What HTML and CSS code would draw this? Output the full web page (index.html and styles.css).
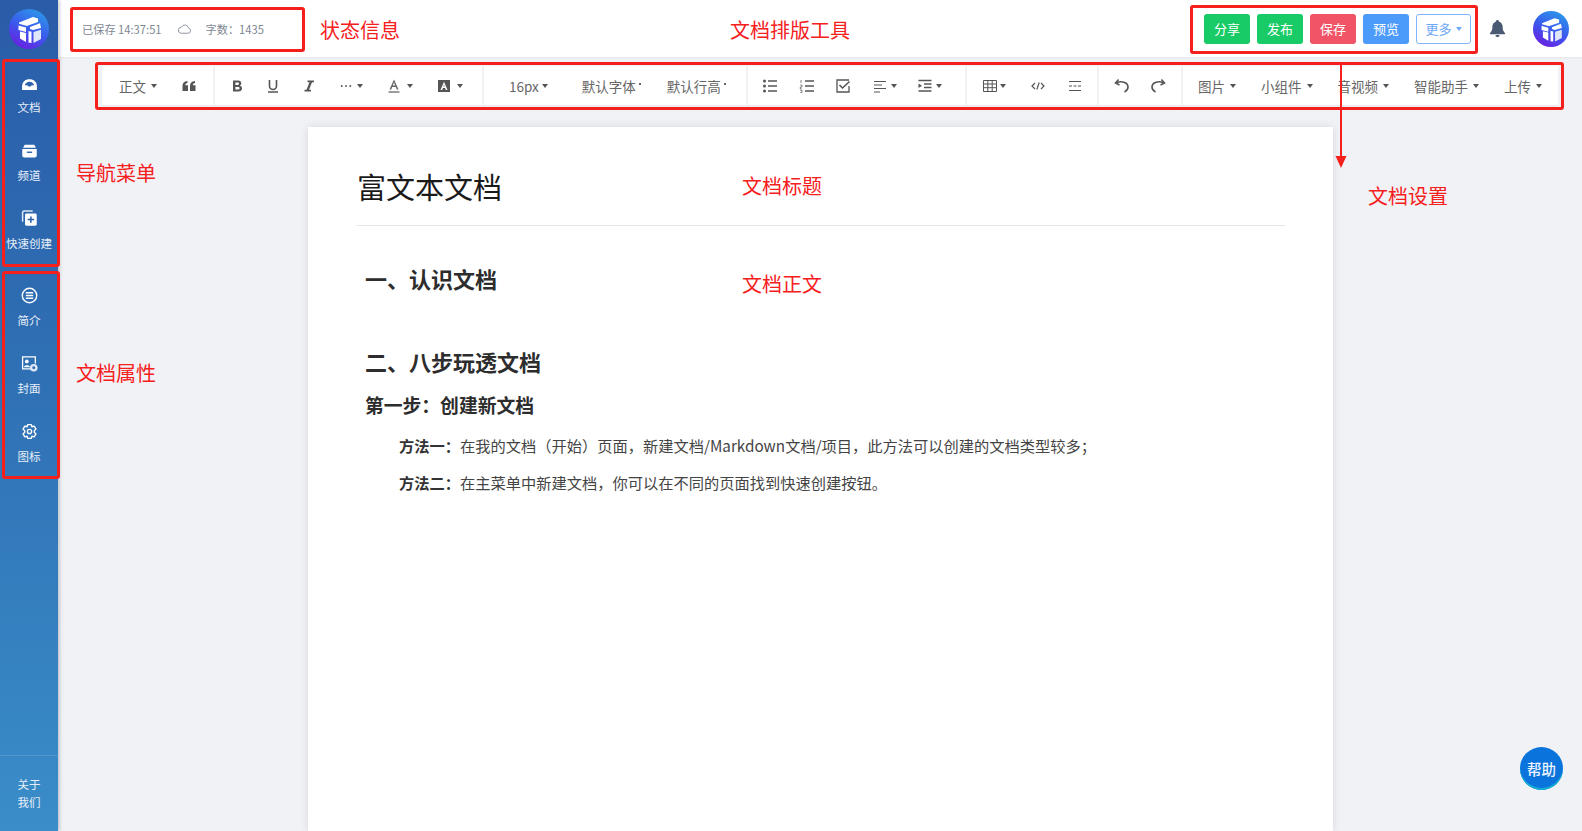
FILE: index.html
```html
<!DOCTYPE html>
<html lang="zh-CN">
<head>
<meta charset="utf-8">
<title>富文本文档</title>
<link rel="stylesheet" href="styles.css">
</head>
<body>
<svg class="defs" width="0" height="0" aria-hidden="true">
  <defs>
    <linearGradient id="lg" x1="0.8" y1="0" x2="0.3" y2="1">
      <stop offset="0" stop-color="#2b9be8"/><stop offset="0.55" stop-color="#3c58ee"/><stop offset="1" stop-color="#6a1fe0"/>
    </linearGradient>
    <symbol id="logo" viewBox="0 0 40 40">
      <circle cx="20" cy="20" r="20" fill="url(#lg)"/>
      <path d="M10 13.5 L24 8 L29 9.5 L29 13 L19 16.5 L18 17 L10 14.8Z" fill="#fff"/>
      <path d="M21 18 L31 14.3 L32 19 L24 21 L21 20Z" fill="#fff"/>
      <path d="M9.5 16.5 L17 18.5 L17 23 L9.5 21Z" fill="#fff"/>
      <path d="M11 22.5 L17 24 L17 33 L11 29.5Z" fill="#fff"/>
      <path d="M19.5 22 L22.5 22.8 L22.5 34 L19.5 33.5Z" fill="#fff"/>
      <path d="M24.5 23 L32 20.8 L32 30 L24.5 34Z" fill="#dfe6f7"/>
    </symbol>
  </defs>
</svg>

<aside class="side">
  <svg class="logo side-logo"><use href="#logo"/></svg>
  <nav class="side-group">
    <a class="side-item"><svg class="side-ico" viewBox="0 0 16 16"><path d="M1 12 C1 7.5 4 5 8 5 S15 7.5 15 12 V15 H1Z" fill="#fff"/><path d="M3.5 10.5 C4.3 8.5 6 7.3 8 7.3 S11.7 8.5 12.5 10.5 H10 L9 11.8 H7 L6 10.5Z" fill="#2b62ac"/></svg><span>文档</span></a>
    <a class="side-item"><svg class="side-ico" viewBox="0 0 16 16"><path d="M3.5 2.5 H12.5 L14 5.5 H2Z" fill="#fff"/><path d="M1.2 6.5 H14.8 V13 Q14.8 14.5 13 14.5 H3 Q1.2 14.5 1.2 13Z" fill="#fff"/><rect x="5.5" y="9" width="5" height="1.3" fill="#2b62ac"/></svg><span>频道</span></a>
    <a class="side-item"><svg class="side-ico" viewBox="0 0 16 16"><path d="M1.5 11 V2.5 Q1.5 1 3 1 H11" fill="none" stroke="#dfe8f5" stroke-width="1.4"/><rect x="3.8" y="3.3" width="11" height="11.5" rx="1.4" fill="#fff"/><path d="M9.3 6 V12 M6.3 9 H12.3" stroke="#2b62ac" stroke-width="1.5"/></svg><span>快速创建</span></a>
  </nav>
  <nav class="side-group side-group-b">
    <a class="side-item"><svg class="side-ico" viewBox="0 0 16 16"><circle cx="8" cy="8" r="6.8" fill="none" stroke="#fff" stroke-width="1.3"/><path d="M4.5 5.5 H11.5 M4.5 8 H11.5 M4.5 10.5 H11.5" stroke="#fff" stroke-width="1.4"/></svg><span>简介</span></a>
    <a class="side-item"><svg class="side-ico" viewBox="0 0 16 16"><path d="M9 13 H1.5 V1.8 H13.5 V8" fill="none" stroke="#fff" stroke-width="1.2"/><circle cx="5.5" cy="6" r="1.8" fill="#fff"/><path d="M2.8 11.5 C3 9 8 9 8.5 11.5Z" fill="#fff"/><circle cx="12" cy="12" r="3.6" fill="#dfe8f5"/><circle cx="12" cy="12" r="1.4" fill="#2f6db0"/></svg><span>封面</span></a>
    <a class="side-item"><svg class="side-ico" viewBox="0 0 16 16"><path d="M6.3 1.5 H9.7 L10.3 3.5 L12.4 2.9 L14.1 5.7 L12.5 7.2 V8.8 L14.1 10.3 L12.4 13.1 L10.3 12.5 L9.7 14.5 H6.3 L5.7 12.5 L3.6 13.1 L1.9 10.3 L3.5 8.8 V7.2 L1.9 5.7 L3.6 2.9 L5.7 3.5Z" fill="none" stroke="#fff" stroke-width="1.3" stroke-linejoin="round"/><circle cx="8" cy="8" r="2" fill="none" stroke="#fff" stroke-width="1.3"/></svg><span>图标</span></a>
  </nav>
  <div class="side-about">关于<br>我们</div>
</aside>

<div class="main">
  <header class="top">
    <div class="status">
      <span>已保存 14:37:51</span>
      <svg class="cloud" viewBox="0 0 16 12"><path d="M4 10.5 H12 A2.8 2.8 0 0 0 12.4 5 A4.2 4.2 0 0 0 4.6 4 A3.3 3.3 0 0 0 4 10.5Z" fill="none" stroke="#8a929c" stroke-width="1"/></svg>
      <span>字数：1435</span>
    </div>
    <div class="actions">
      <button class="btn btn-green">分享</button>
      <button class="btn btn-green">发布</button>
      <button class="btn btn-red">保存</button>
      <button class="btn btn-blue">预览</button>
      <button class="btn btn-line">更多<i class="caret caret-blue"></i></button>
      <svg class="bell" viewBox="0 0 18 20"><path d="M9 1 C10 1 10.5 1.6 10.5 2.5 C13.5 3.3 14.5 6 14.5 9 C14.5 12 15.5 13.5 17 15 V16 H1 V15 C2.5 13.5 3.5 12 3.5 9 C3.5 6 4.5 3.3 7.5 2.5 C7.5 1.6 8 1 9 1Z" fill="#4a5a72"/><path d="M6.8 17 H11.2 A2.2 2.2 0 0 1 6.8 17Z" fill="#4a5a72"/></svg>
      <svg class="logo top-logo"><use href="#logo"/></svg>
    </div>
  </header>

  <div class="tool-wrap">
    <div class="toolbar">
      <div class="tg tg1">
        <span class="ti">正文<i class="caret"></i></span>
        <svg class="ic" viewBox="0 0 16 16"><path d="M1.5 13 V8 C1.5 5 3 3.5 6.5 3 V5 C5 5.3 4.3 6 4.3 7.2 H7 V13Z M9 13 V8 C9 5 10.5 3.5 14 3 V5 C12.5 5.3 11.8 6 11.8 7.2 H14.5 V13Z" fill="#555"/></svg>
      </div>
      <div class="tg tg2">
        <svg class="ic" viewBox="0 0 16 16"><path d="M4 2.5 H9 C11.5 2.5 12.3 4 12.3 5.3 C12.3 6.5 11.5 7.3 10.8 7.6 C12 8 13 9 13 10.5 C13 12.3 11.5 13.5 9.5 13.5 H4Z M6.4 4.5 V6.9 H8.6 C9.5 6.9 10 6.3 10 5.7 C10 5 9.5 4.5 8.6 4.5Z M6.4 8.9 V11.5 H9 C10 11.5 10.6 11 10.6 10.2 C10.6 9.4 10 8.9 9 8.9Z" fill="#555" fill-rule="evenodd"/></svg>
        <svg class="ic" viewBox="0 0 16 16"><path d="M4.5 2 V8 A3.5 3.5 0 0 0 11.5 8 V2" fill="none" stroke="#555" stroke-width="1.6"/><path d="M3 14 H13" stroke="#555" stroke-width="1.5"/></svg>
        <svg class="ic" viewBox="0 0 16 16"><path d="M6.5 2.5 H13 V4.3 H11 L8 11.8 H10 V13.5 H3.5 V11.8 H5.5 L8.5 4.3 H6.5Z" fill="#555"/></svg>
        <span class="ti"><svg class="ic-s" viewBox="0 0 14 4"><circle cx="2" cy="2" r="1.1" fill="#555"/><circle cx="7" cy="2" r="1.1" fill="#555"/><circle cx="12" cy="2" r="1.1" fill="#555"/></svg><i class="caret"></i></span>
        <span class="ti"><svg class="ic" viewBox="0 0 16 16"><path d="M8 1.5 L12.5 11.5 H10.8 L9.8 9 H6.2 L5.2 11.5 H3.5Z M6.8 7.5 H9.2 L8 4.5Z" fill="#666" fill-rule="evenodd"/><path d="M2.5 14 H13.5" stroke="#666" stroke-width="1.3"/></svg><i class="caret"></i></span>
        <span class="ti"><svg class="ic" viewBox="0 0 16 16"><path d="M2 2 H14 V14 H2Z M8 3.8 L4.5 12 H6.2 L6.9 10 H9.1 L9.8 12 H11.5Z M7.4 8.6 H8.6 L8 6.6Z" fill="#555" fill-rule="evenodd"/></svg><i class="caret"></i></span>
      </div>
      <div class="tg tg3">
        <span class="ti">16px<i class="caret"></i></span>
        <span class="ti ti-font">默认字体<i class="dot"></i></span>
        <span class="ti">默认行高<i class="dot"></i></span>
      </div>
      <div class="tg tg4">
        <svg class="ic" viewBox="0 0 16 16"><circle cx="2.5" cy="3" r="1.5" fill="#555"/><circle cx="2.5" cy="8" r="1.5" fill="#555"/><circle cx="2.5" cy="13" r="1.5" fill="#555"/><path d="M6 3 H15 M6 8 H15 M6 13 H15" stroke="#555" stroke-width="1.3"/></svg>
        <svg class="ic" viewBox="0 0 16 16"><path d="M2 2 V5 M1.3 7 H3 V9 H1.3 V11 H3 M1.3 12.5 H3 V14.5 H1.3" fill="none" stroke="#666" stroke-width=".8"/><path d="M6 3 H15 M6 8 H15 M6 13 H15" stroke="#555" stroke-width="1.3"/></svg>
        <svg class="ic" viewBox="0 0 16 16"><path d="M14 2 H2 V14 H14 V8" fill="none" stroke="#555" stroke-width="1.3"/><path d="M4.5 7 L7.5 10 L14.5 3.5" fill="none" stroke="#555" stroke-width="1.6"/></svg>
        <span class="ti"><svg class="ic" viewBox="0 0 16 16"><path d="M2 3.5 H14 M2 7 H10 M2 10.5 H14 M2 14 H8" stroke="#555" stroke-width="1.2"/></svg><i class="caret"></i></span>
        <span class="ti"><svg class="ic" viewBox="0 0 16 16"><path d="M1.5 2.5 H14.5 M7 6 H14.5 M7 9.5 H14.5 M1.5 13 H14.5" stroke="#555" stroke-width="1.6"/><path d="M1.5 5.5 L5 7.8 L1.5 10Z" fill="#555"/></svg><i class="caret"></i></span>
      </div>
      <div class="tg tg5">
        <span class="ti"><svg class="ic" viewBox="0 0 16 16"><path d="M1.5 2.5 H14.5 V13.5 H1.5Z M1.5 6 H14.5 M1.5 9.7 H14.5 M5.8 2.5 V13.5 M10.2 2.5 V13.5" fill="none" stroke="#555" stroke-width="1"/></svg><i class="caret"></i></span>
        <svg class="ic" viewBox="0 0 16 16"><path d="M5 5 L2 8 L5 11 M11 5 L14 8 L11 11 M9.2 4.5 L6.8 11.5" fill="none" stroke="#555" stroke-width="1.2"/></svg>
        <svg class="ic" viewBox="0 0 16 16"><path d="M2 3.5 H14 M2 12.5 H14" stroke="#555" stroke-width="1.1"/><path d="M2 8 H14" stroke="#555" stroke-width="1.1" stroke-dasharray="3 1.5"/></svg>
      </div>
      <div class="tg tg6">
        <svg class="ic" viewBox="0 0 16 16"><path d="M4.5 1.5 L1.5 5 L5.5 7" fill="none" stroke="#555" stroke-width="1.5"/><path d="M2 5 C7 2.5 14 4 14 9 C14 11.5 12.5 13 10.5 14" fill="none" stroke="#555" stroke-width="1.6"/></svg>
        <svg class="ic" viewBox="0 0 16 16"><path d="M11.5 1.5 L14.5 5 L10.5 7" fill="none" stroke="#555" stroke-width="1.5"/><path d="M14 5 C9 2.5 2 4 2 9 C2 11.5 3.5 13 5.5 14" fill="none" stroke="#555" stroke-width="1.6"/></svg>
      </div>
      <div class="tg tg7">
        <span class="ti">图片<i class="caret"></i></span>
        <span class="ti">小组件<i class="caret"></i></span>
        <span class="ti">音视频<i class="caret"></i></span>
        <span class="ti">智能助手<i class="caret"></i></span>
        <span class="ti">上传<i class="caret"></i></span>
      </div>
    </div>
  </div>

  <div class="stage">
    <article class="doc">
      <h1 class="doc-title">富文本文档</h1>
      <div class="doc-body">
        <h2 class="h-one">一、认识文档</h2>
        <h2 class="h-one h-two">二、八步玩透文档</h2>
        <h3 class="h-step">第一步：创建新文档</h3>
        <p class="para"><b>方法一：</b>在我的文档（开始）页面，新建文档/Markdown文档/项目，此方法可以创建的文档类型较多；</p>
        <p class="para"><b>方法二：</b>在主菜单中新建文档，你可以在不同的页面找到快速创建按钮。</p>
      </div>
    </article>
  </div>
</div>

<button class="help">帮助</button>

<div class="anno box box-status"></div>
<div class="anno box box-actions"></div>
<div class="anno box box-toolbar"></div>
<div class="anno box box-nav"></div>
<div class="anno box box-attr"></div>
<div class="anno label l-status">状态信息</div>
<div class="anno label l-tools">文档排版工具</div>
<div class="anno label l-nav">导航菜单</div>
<div class="anno label l-attr">文档属性</div>
<div class="anno label l-title">文档标题</div>
<div class="anno label l-body">文档正文</div>
<div class="anno label l-set">文档设置</div>
<svg class="anno arrow" viewBox="0 0 12 103"><path d="M6 0 V94" stroke="#f5201c" stroke-width="2"/><path d="M0.5 91 H11.5 L6 103Z" fill="#f5201c"/></svg>
</body>
</html>
```

FILE: styles.css
```css
* { box-sizing: border-box; }
html, body { height: 100%; }
body {
  margin: 0;
  display: flex;
  height: 831px;
  overflow: hidden;
  background: #f1f2f6;
  font-family: "Noto Sans CJK SC", "Liberation Sans", sans-serif;
  color: #555;
}
.defs { position: absolute; }

/* sidebar */
.side {
  flex: 0 0 58px;
  display: flex;
  flex-direction: column;
  align-items: center;
  background: linear-gradient(180deg, #2a5ca8 0%, #2f70b4 45%, #3a8dc9 100%);
  box-shadow: 1px 0 4px rgba(60, 70, 90, .35);
  color: #e6eef8;
  position: relative;
  z-index: 2;
}
.logo { display: block; }
.side-logo { width: 40px; height: 40px; margin-top: 9px; flex: none; }
.side-group { display: flex; flex-direction: column; width: 100%; margin-top: 23px; }
.side-group-b { margin-top: 9px; }
.side-item { display: flex; flex-direction: column; align-items: center; height: 68px; font-size: 11.5px; line-height: 16px; }
.side-ico { width: 17px; height: 17px; margin-bottom: 8px; margin-top: 2px; flex: none; }
.side-item span { white-space: nowrap; }
.side-about {
  margin-top: auto;
  width: 100%;
  height: 76px;
  border-top: 1px solid rgba(255, 255, 255, .12);
  font-size: 11.5px;
  line-height: 18px;
  text-align: center;
  padding-top: 19px;
}

/* main column */
.main { flex: 1; min-width: 0; display: flex; flex-direction: column; }
.top {
  flex: 0 0 57px;
  background: #fff;
  display: flex;
  align-items: center;
  justify-content: space-between;
  padding: 0 13px 0 24px;
  box-shadow: 0 1px 2px rgba(0, 0, 0, .05);
}
.status { display: flex; align-items: center; font-size: 11.2px; color: #7e8792; }
.cloud { width: 15px; height: 12px; margin: 0 14px 0 15px; }
.actions { display: flex; align-items: center; gap: 7px; }
.btn {
  height: 30px;
  width: 46px;
  padding: 0;
  border: 1px solid transparent;
  border-radius: 3px;
  font: inherit;
  font-size: 13px;
  color: #fff;
  display: flex;
  align-items: center;
  justify-content: center;
}
.btn-green { background: #19cb66; }
.btn-red { background: #f25467; }
.btn-blue { background: #4c9bfb; }
.btn-line { width: 55px; background: #fff; border-color: #7fb4fb; color: #6ea8f8; }
.bell { width: 17px; height: 19px; margin-left: 11px; }
.top-logo { width: 36px; height: 36px; margin-left: 20px; }

/* toolbar */
.tool-wrap { flex: none; padding: 9px 24px 0 44px; }
.toolbar { height: 39px; background: #fff; display: flex; box-shadow: 0 1px 1px rgba(0,0,0,.03); }
.tg { display: flex; align-items: center; border-right: 2px solid #f1f2f6; height: 100%; flex: none; font-size: 13.5px; color: #666; }
.tg1 { width: 113px; padding-left: 17px; gap: 24px; }
.tg2 { width: 269px; padding-left: 14px; gap: 20px; }
.tg2 .ti { margin-left: 3px; }
.tg3 { width: 264px; padding-left: 25px; gap: 26px; }
.tg3 .caret { margin-left: 3px; }
.ti-font { margin-left: 8px; }
.tg4 { width: 219px; padding-left: 14px; gap: 20.5px; }
.tg4 .caret { margin-left: 3px; }
.tg5 { width: 132px; padding-left: 15px; gap: 21px; }
.tg5 .caret { margin-left: 2px; }
.tg5 .ti { margin-right: 3px; }
.tg6 { width: 84px; padding-left: 15px; gap: 20px; }
.tg7 { flex: 1; padding-left: 15px; gap: 25px; border-right: 0; }
.ti { display: inline-flex; align-items: center; white-space: nowrap; }
.ic { width: 16px; height: 16px; flex: none; display: block; }
.ic-s { width: 12px; height: 4px; display: block; }
.caret {
  display: inline-block;
  width: 0;
  height: 0;
  margin-left: 5px;
  border: 3.5px solid transparent;
  border-top: 4px solid #555;
  border-bottom: 0;
}
.caret-blue { border-top-color: #6ea8f8; margin-left: 4px; }
.dot { display: inline-block; width: 2px; height: 2px; background: #666; margin: 0 0 4px 3px; }

/* document */
.stage { flex: 1; min-height: 0; padding: 22px 0 0 250px; }
.doc {
  width: 1025px;
  height: 100%;
  background: #fff;
  box-shadow: 0 0 8px rgba(60, 70, 90, .14);
  padding: 36px 48px 0 48px;
}
.doc-title {
  margin: 0;
  height: 63px;
  font-size: 29px;
  line-height: 46px;
  font-weight: 400;
  color: #1a1a1a;
  padding-left: 1px;
  border-bottom: 1px solid #e8e8ea;
}
.doc-body { padding: 34px 0 0 9px; color: #333; }
.h-one { margin: 0; font-size: 22px; line-height: 36px; font-weight: 700; color: #2d2d2d; }
.h-two { margin-top: 47px; }
.h-step { margin: 11px 0 0; font-size: 18.8px; line-height: 30px; font-weight: 700; color: #2d2d2d; }
.para { margin: 14px 0 0; padding-left: 34px; font-size: 15.26px; line-height: 23px; color: #444; }
.para + .para { margin-top: 14px; }
.para b { color: #333; }

/* help */
.help {
  position: absolute;
  left: 1520px;
  top: 747px;
  width: 43px;
  height: 43px;
  padding: 0;
  border: 0;
  border-radius: 50%;
  background: #0a74dc;
  box-shadow: inset 0 -2px 0 #12aed4;
  color: #eef5ff;
  font: inherit;
  font-size: 14.5px;
  font-weight: 500;
  z-index: 3;
}

/* red annotations drawn over the screenshot */
.anno { position: absolute; z-index: 5; }
.box { border: 3px solid #f5201c; border-radius: 3px; }
.box-status { left: 70px; top: 7px; width: 235px; height: 45px; }
.box-actions { left: 1190px; top: 5px; width: 288px; height: 49px; }
.box-toolbar { left: 95px; top: 62px; width: 1469px; height: 48px; }
.box-nav { left: 2px; top: 59px; width: 58px; height: 208px; }
.box-attr { left: 2px; top: 271px; width: 58px; height: 208px; }
.label { color: #f5201c; font-size: 20px; line-height: 28px; white-space: nowrap; }
.l-status { left: 320px; top: 16px; }
.l-tools { left: 730px; top: 16px; }
.l-nav { left: 76px; top: 159px; }
.l-attr { left: 76px; top: 359px; }
.l-title { left: 742px; top: 172px; }
.l-body { left: 742px; top: 270px; }
.l-set { left: 1368px; top: 182px; }
.arrow { left: 1335px; top: 65px; width: 12px; height: 103px; }
```
